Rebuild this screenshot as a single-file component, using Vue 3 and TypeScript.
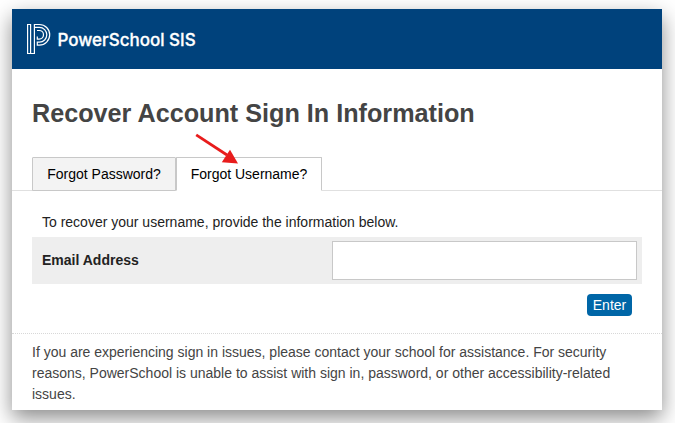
<script setup lang="ts">
import { ref } from 'vue'

const tabs: string[] = ['Forgot Password?', 'Forgot Username?']
const active = ref(1)
const email = ref('')
</script>

<template>
  <main class="page">
    <section class="card">
      <header class="brand">
        <svg class="logo" viewBox="0 0 26 32" width="26" height="32" aria-hidden="true">
          <path d="M1.6 1.5H4.6V30.5H1.6ZM4.6 30.5H8.4V1.5H13.4A10.3 10.3 0 0 1 13.4 22.1H11.3V19.2H13.4A7.4 7.4 0 0 0 13.4 4.4H8.4" />
          <path d="M11 7.5H13.2A4.3 4.3 0 0 1 13.2 16.1H11.3V13.6" />
        </svg>
        <span class="name">PowerSchool SIS</span>
      </header>
      <h1>Recover Account Sign In Information</h1>
      <nav class="tabs">
        <button v-for="(tab, i) in tabs" :key="tab" class="tab" :class="{ active: i === active }" @click="active = i">{{ tab }}</button>
        <svg class="arrow" viewBox="0 0 46 32" width="46" height="32" aria-hidden="true">
          <path d="M2.2 2.8L33 23" stroke="#e81c1c" stroke-width="2.8" />
          <path d="M44 31.6L27.8 30.2L36 17.8Z" fill="#e81c1c" />
        </svg>
      </nav>
      <form class="form" @submit.prevent>
        <p class="intro">To recover your username, provide the information below.</p>
        <div class="row">
          <label for="email">Email Address</label>
          <input id="email" v-model="email" type="text" />
        </div>
        <div class="actions"><button class="enter" type="submit">Enter</button></div>
      </form>
      <footer>If you are experiencing sign in issues, please contact your school for assistance. For security reasons, PowerSchool is unable to assist with sign in, password, or other accessibility-related issues.</footer>
    </section>
  </main>
</template>

<style>
body { background: #fff; overflow: hidden; }
</style>

<style scoped>
.page {
  box-sizing: border-box;
  height: 423px;
  padding: 9px 13px 13px 12px;
  overflow: hidden;
  font: 14px/21px "Liberation Sans", Arial, sans-serif;
  color: #222;
}
.card {
  display: flex;
  flex-direction: column;
  height: 401px;
  background: #fff;
  box-shadow: 0 8px 20px rgba(0, 0, 0, .46);
}
.brand {
  display: flex;
  align-items: center;
  box-sizing: border-box;
  height: 60px;
  padding-left: 14px;
  background: #00427c;
}
.logo { fill: none; stroke: #fff; stroke-width: 1.2; }
.name {
  margin: 2px 0 0 5.5px;
  color: #fff;
  font: 500 17px/24px Inter, sans-serif;
  -webkit-text-stroke: .3px #fff;
}
h1 {
  margin: 29px 0 0 20px;
  color: #444;
  font-size: 25.2px;
  line-height: 30px;
}
.tabs {
  position: relative;
  display: flex;
  box-sizing: border-box;
  height: 34px;
  margin-top: 29px;
  padding-left: 20px;
  border-bottom: 1px solid #e0e0e0;
}
.tab {
  box-sizing: border-box;
  width: 144px;
  height: 34px;
  padding: 0;
  border: 1px solid #c8c8c8;
  border-radius: 1px 1px 0 0;
  background: #f3f3f3;
  color: #000;
  font: inherit;
}
.tab.active { width: 146px; border-bottom-color: #fff; background: #fff; }
.arrow { position: absolute; left: 182px; top: -25px; fill: none; }
.form { display: flex; flex-direction: column; height: 142px; }
.intro { margin: 21px 0 4px 30px; }
.row {
  display: flex;
  align-items: center;
  justify-content: space-between;
  box-sizing: border-box;
  height: 47px;
  margin: 0 20px;
  padding: 0 5px 0 10px;
  background: #eee;
}
label { font-weight: bold; }
input {
  box-sizing: border-box;
  width: 305px;
  height: 39px;
  border: 1px solid #c8c8c8;
  background: #fff;
  outline: 0;
}
.actions { display: flex; justify-content: flex-end; padding: 10px 30px 0 0; }
.enter {
  width: 45px;
  height: 22px;
  padding: 0;
  border: 0;
  border-radius: 4px;
  background: #0066a7;
  color: #fff;
  font: inherit;
}
footer {
  padding: 8px 20px 0;
  border-top: 1px dotted #d8d8d8;
  color: #444;
}
</style>
